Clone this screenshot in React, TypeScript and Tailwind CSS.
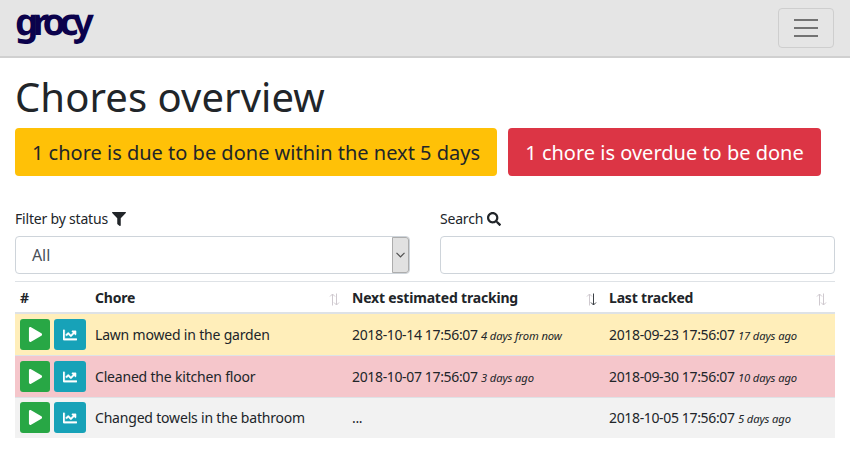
import { FaPlay, FaChartLine, FaFilter, FaSearch } from "react-icons/fa";

function SortArrows({ active = false }: { active?: boolean }) {
  return (
    <svg width="11" height="13" viewBox="0 0 11 13" fill="none" className="mt-[6px] shrink-0">
      <path d="M3.5 12.5V1M1 3.5L3.5 1L6 3.5" stroke="#cfc9cf" />
      <path d="M7.5 0.5V12M5 9.5L7.5 12L10 9.5" stroke={active ? "#3c4146" : "#cfc9cf"} />
    </svg>
  );
}

const grid = "grid grid-cols-[75px_257px_257px_231px]";

const rows = [
  { name: "Lawn mowed in the garden", next: "2018-10-14 17:56:07", nextAgo: "4 days from now", last: "2018-09-23 17:56:07", lastAgo: "17 days ago", style: "h-[41px] bg-[#ffeeba] pt-[5px]" },
  { name: "Cleaned the kitchen floor", next: "2018-10-07 17:56:07", nextAgo: "3 days ago", last: "2018-09-30 17:56:07", lastAgo: "10 days ago", style: "h-[42px] border-t border-[#dee2e6] bg-[#f5c6cb] pt-[5px]" },
  { name: "Changed towels in the bathroom", next: "...", nextAgo: "", last: "2018-10-05 17:56:07", lastAgo: "5 days ago", style: "h-[41px] border-t border-[#dee2e6] bg-[#f2f2f2] pt-[4px]" },
];

function Stamp({ date, ago }: { date: string; ago: string }) {
  return (
    <div className="pl-[5px] tracking-[-0.35px]">
      {date} <span className="text-[11.2px] tracking-[-0.1px] italic">{ago}</span>
    </div>
  );
}

export default function App() {
  return (
    <div className="h-[462px] w-[850px] bg-white font-['Noto_Sans',sans-serif] text-sm tracking-[-0.19px] text-[#212529]">
      <header className="flex h-[58px] items-start justify-between border-b-2 border-[#d0d0d0] bg-[#e5e5e5] pr-4 pl-[15px]">
        <div className="pr-2 text-[37px] leading-[42px] font-bold tracking-[-5.9px] text-[#0b024c] [text-rendering:geometricPrecision]">grocy</div>
        <button className="mt-2 flex h-10 w-14 flex-col items-center justify-center gap-[6px] rounded border border-[#cecece]">
          <span className="h-[2px] w-6 bg-[#737373]" />
          <span className="h-[2px] w-6 bg-[#737373]" />
          <span className="h-[2px] w-6 bg-[#737373]" />
        </button>
      </header>
      <main className="px-[15px]">
        <h1 className="h-[70px] pt-[15px] text-[40px] leading-[48px] tracking-[0.08px]">Chores overview</h1>
        <div className="flex gap-[11px] text-xl tracking-normal whitespace-nowrap">
          <button className="h-12 w-[482px] rounded bg-[#ffc107] pt-[2px]">1 chore is due to be done within the next 5 days</button>
          <button className="h-12 w-[313px] rounded bg-[#dc3545] pt-[2px] text-white">1 chore is overdue to be done</button>
        </div>
        <div className="mt-8 grid grid-cols-2 gap-[30px]">
          <div>
            <div className="flex h-[28px] items-start gap-1 leading-[22px]">Filter by status <FaFilter className="mt-1 size-[14px]" /></div>
            <div className="flex h-[38px] items-center justify-between rounded border border-[#ced4da] pl-4 text-base tracking-[-0.1px] text-[#495057]">
              All
              <span className="flex h-full w-[17px] items-center justify-center rounded-r-[3px] border border-[#adadad] bg-[#e1e1e1]">
                <svg width="9" height="6" viewBox="0 0 9 6" fill="none"><path d="M0.5 0.8L4.5 4.8L8.5 0.8" stroke="#505050" strokeWidth="1.2" /></svg>
              </span>
            </div>
          </div>
          <div>
            <div className="flex h-[28px] items-start gap-1 leading-[22px]">Search <FaSearch className="mt-1 size-[14px]" /></div>
            <div className="h-[38px] rounded border border-[#ced4da]" />
          </div>
        </div>
        <section className="mt-[7px] whitespace-nowrap">
          <div className={`${grid} h-[33px] border-t border-b-2 border-[#dee2e6] pt-[5px] leading-[22px] font-bold`}>
            <div className="pl-[5px]">#</div>
            <div className="flex justify-between pr-[7px] pl-[5px]">Chore <SortArrows /></div>
            <div className="flex justify-between pr-[7px] pl-[5px]">Next estimated tracking <SortArrows active /></div>
            <div className="flex justify-between pr-[8px] pl-[5px]">Last tracked <SortArrows /></div>
          </div>
          {rows.map((row) => (
            <div key={row.name} className={`${grid} leading-[31px] ${row.style}`}>
              <div className="flex gap-1 pl-[5px] text-white">
                <button className="flex h-[31px] w-[30px] items-center justify-center rounded-[3px] bg-[#28a745]"><FaPlay className="size-[15px]" /></button>
                <button className="flex h-[31px] w-8 items-center justify-center rounded-[3px] bg-[#17a2b8]"><FaChartLine className="size-[14px]" stroke="currentColor" strokeWidth="12" /></button>
              </div>
              <div className="pl-[5px]">{row.name}</div>
              <Stamp date={row.next} ago={row.nextAgo} />
              <Stamp date={row.last} ago={row.lastAgo} />
            </div>
          ))}
        </section>
      </main>
    </div>
  );
}
